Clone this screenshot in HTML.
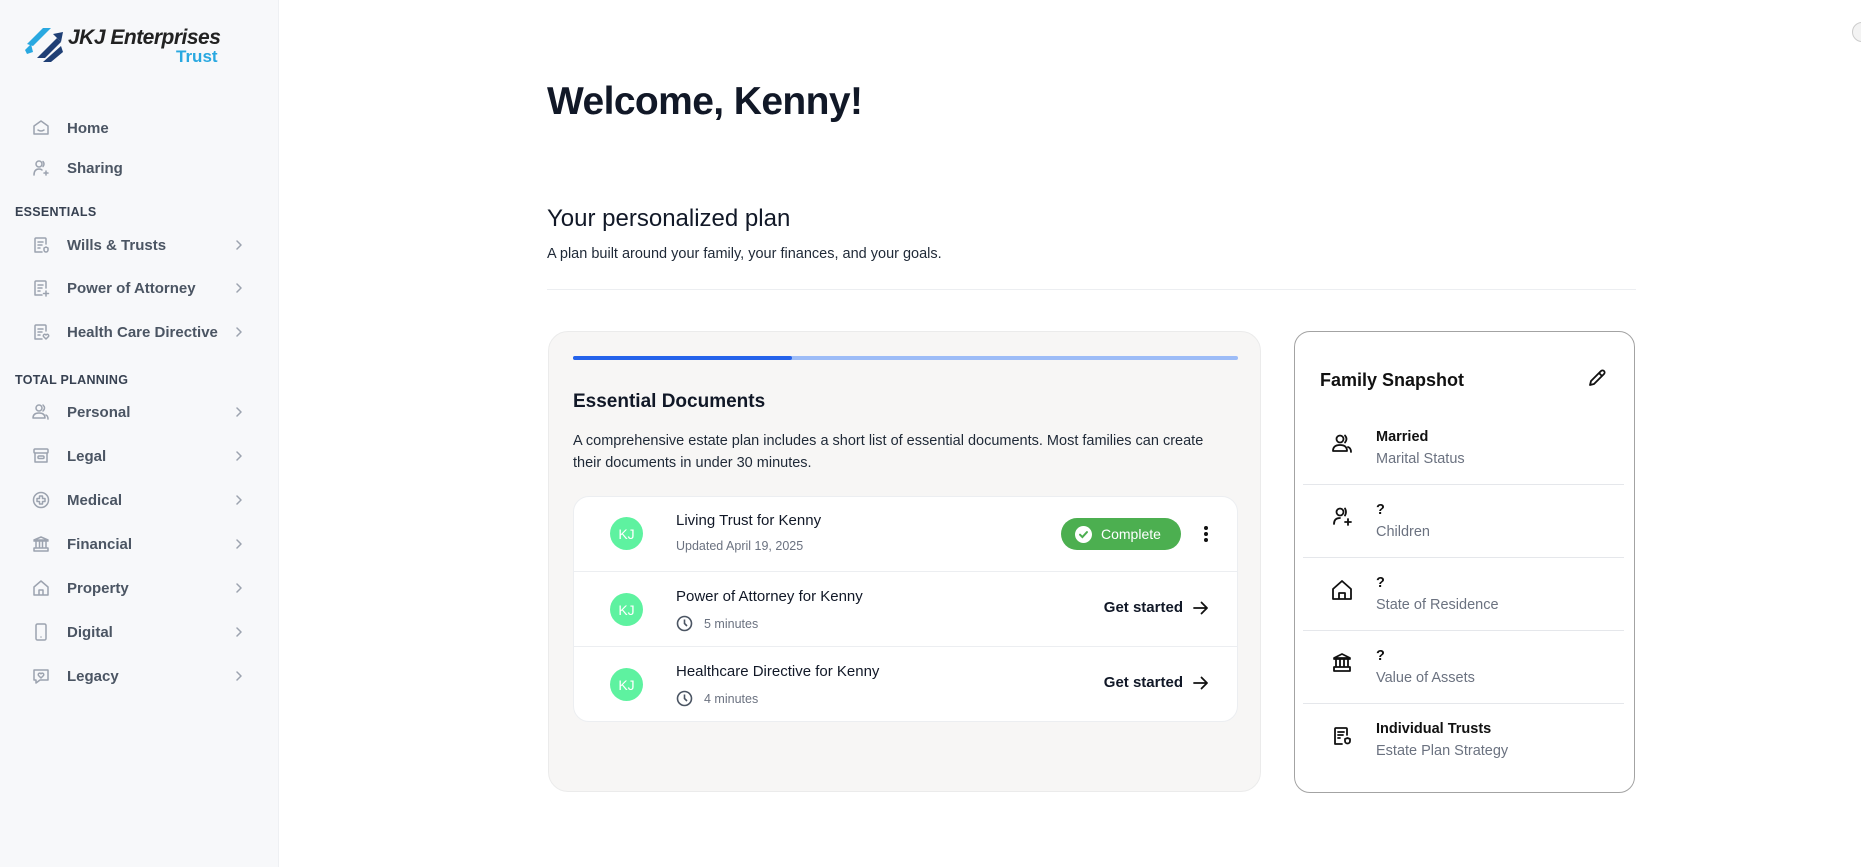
<!DOCTYPE html>
<html><head><meta charset="utf-8"><style>
*{margin:0;padding:0;box-sizing:border-box}
body{width:1861px;height:867px;overflow:hidden;background:#fff;font-family:"Liberation Sans",sans-serif;color:#111827;position:relative}
.sb{position:absolute;left:0;top:0;width:279px;height:867px;background:#f7f8fa;border-right:1px solid #eef0f3}
.ab{position:absolute}
.nav{position:absolute;left:0;width:279px;height:30px;display:flex;align-items:center;font-size:15px;font-weight:bold;color:#4b5563}
.nav svg{position:absolute;left:31px;width:20px;height:20px;fill:none;stroke:#9ca3af;stroke-width:1.5;stroke-linecap:round;stroke-linejoin:round}
.nav span{position:absolute;left:67px}
.nav .ch{position:absolute;left:234px;width:10px;height:10px;stroke:#9ca3af}
.sec{position:absolute;left:15px;font-size:12.5px;font-weight:bold;color:#374151;letter-spacing:.3px}
.row{position:absolute;left:0;width:663px;height:75px;border-top:1px solid #eceef1}
.av{position:absolute;left:36px;top:21px;width:33px;height:33px;border-radius:50%;background:#5ef2a0;color:#fff;font-size:14px;display:flex;align-items:center;justify-content:center}
.t1{position:absolute;left:102px;top:16px;font-size:15px;color:#111827}
.t2{position:absolute;left:102px;top:43px;font-size:12.5px;color:#6b7280;display:flex;align-items:center;gap:8px}
.gs{position:absolute;right:28px;top:27px;font-size:15px;font-weight:bold;display:flex;align-items:center;gap:10px}
.fr{position:absolute;left:8px;width:321px;height:73px;border-top:1px solid #e5e7eb}
.fr svg{position:absolute;left:27px;top:20px;width:24px;height:24px;fill:none;stroke:#111;stroke-width:1.8;stroke-linecap:round;stroke-linejoin:round}
.fr b{position:absolute;left:73px;top:17px;font-size:14.5px;font-weight:bold;color:#111}
.fr i{position:absolute;left:73px;top:39px;font-size:14.5px;font-style:normal;color:#6b7280}
</style></head><body>
<div class="sb">
 <svg class="ab" style="left:23px;top:24px" width="44" height="40" viewBox="0 0 44 40"><path d="M4 20 L20 4 L28 4 L10 22 Z" fill="#29a8e0"/><path d="M2 26 L8 20 L10 28 L4 30Z" fill="#29a8e0"/><path d="M14 34 L34 14 L38 18 L22 34Z" fill="#1f3f75"/><path d="M30 10 L40 8 L38 18Z" fill="#1f3f75"/><path d="M20 38 L38 22 L40 28 L28 38Z" fill="#1f3f75"/></svg>
 <div class="ab" style="left:68px;top:26px;font-size:21px;font-weight:bold;font-style:italic;color:#222;letter-spacing:-.5px">JKJ Enterprises</div>
 <div class="ab" style="left:176px;top:47px;font-size:17px;font-weight:bold;color:#29a8e0">Trust</div>

 <div class="nav" style="top:113px"><svg viewBox="0 0 20 20"><path d="M3 8 L10 3 L17 8 V16 H3Z"/><path d="M7 12 Q10 14 13 12"/></svg><span>Home</span></div>
 <div class="nav" style="top:153px"><svg viewBox="0 0 20 20"><circle cx="8" cy="6" r="3"/><path d="M3 17 Q3 11 8 11 Q10 11 11 12"/><path d="M15 13v4M13 15h4"/><path d="M12 3.5 Q14 6 12 8.5"/></svg><span>Sharing</span></div>
 <div class="sec" style="top:205px">ESSENTIALS</div>
 <div class="nav" style="top:230px"><svg viewBox="0 0 20 20"><path d="M15 9V4a1 1 0 0 0-1-1H5a1 1 0 0 0-1 1v13h7"/><path d="M7 7h5M7 10h4M7 13h2"/><path d="M13 13l2-1 2 1v2a2 2 0 0 1-2 2 2 2 0 0 1-2-2z"/></svg><span>Wills &amp; Trusts</span><svg class="ch" viewBox="0 0 10 10"><path d="M3 1l4 4-4 4"/></svg></div>
 <div class="nav" style="top:273px"><svg viewBox="0 0 20 20"><path d="M15 10V4a1 1 0 0 0-1-1H5a1 1 0 0 0-1 1v13h7"/><path d="M7 7h5M7 10h4M7 13h2"/><path d="M15 13v5M12.5 15.5h5"/></svg><span>Power of Attorney</span><svg class="ch" viewBox="0 0 10 10"><path d="M3 1l4 4-4 4"/></svg></div>
 <div class="nav" style="top:317px"><svg viewBox="0 0 20 20"><path d="M15 9V4a1 1 0 0 0-1-1H5a1 1 0 0 0-1 1v13h7"/><path d="M7 7h5M7 10h4M7 13h2"/><path d="M15 17l-2.5-2.5a1.3 1.3 0 0 1 2.5-1.5 1.3 1.3 0 0 1 2.5 1.5z"/></svg><span>Health Care Directive</span><svg class="ch" viewBox="0 0 10 10"><path d="M3 1l4 4-4 4"/></svg></div>
 <div class="sec" style="top:373px">TOTAL PLANNING</div>
 <div class="nav" style="top:397px"><svg viewBox="0 0 20 20"><circle cx="8" cy="6" r="3"/><path d="M2 16 Q2 11 8 11 Q14 11 14 16Z"/><path d="M12 3 Q15 6 12 9M15 13 Q17 14 17 17"/></svg><span>Personal</span><svg class="ch" viewBox="0 0 10 10"><path d="M3 1l4 4-4 4"/></svg></div>
 <div class="nav" style="top:441px"><svg viewBox="0 0 20 20"><rect x="3" y="3" width="14" height="4" rx="1"/><path d="M4 7v9h12V7"/><rect x="7" y="10" width="6" height="2.5" rx="1"/></svg><span>Legal</span><svg class="ch" viewBox="0 0 10 10"><path d="M3 1l4 4-4 4"/></svg></div>
 <div class="nav" style="top:485px"><svg viewBox="0 0 20 20"><circle cx="10" cy="10" r="7.5"/><path d="M8.5 6h3v2.5H14v3h-2.5V14h-3v-2.5H6v-3h2.5z"/></svg><span>Medical</span><svg class="ch" viewBox="0 0 10 10"><path d="M3 1l4 4-4 4"/></svg></div>
 <div class="nav" style="top:529px"><svg viewBox="0 0 20 20"><path d="M3 6 L10 3 L17 6 Z M3 7h14M5 7v7M8.5 7v7M11.5 7v7M15 7v7M3 14h14v3H3z"/></svg><span>Financial</span><svg class="ch" viewBox="0 0 10 10"><path d="M3 1l4 4-4 4"/></svg></div>
 <div class="nav" style="top:573px"><svg viewBox="0 0 20 20"><path d="M3 9 L10 3 L17 9 V17 H3Z M8 17v-5h4v5"/></svg><span>Property</span><svg class="ch" viewBox="0 0 10 10"><path d="M3 1l4 4-4 4"/></svg></div>
 <div class="nav" style="top:617px"><svg viewBox="0 0 20 20"><rect x="5" y="2" width="10" height="16" rx="1.5"/><path d="M10 15h.01"/></svg><span>Digital</span><svg class="ch" viewBox="0 0 10 10"><path d="M3 1l4 4-4 4"/></svg></div>
 <div class="nav" style="top:661px"><svg viewBox="0 0 20 20"><path d="M3 4h14v10H9l-4 3v-3H3z"/><path d="M10 12l-2.5-2.5a1.3 1.3 0 0 1 2.5-1.7 1.3 1.3 0 0 1 2.5 1.7z"/></svg><span>Legacy</span><svg class="ch" viewBox="0 0 10 10"><path d="M3 1l4 4-4 4"/></svg></div>
</div>

<div class="ab" style="left:1852px;top:22px;width:20px;height:20px;border-radius:50%;border:1px solid #ccc;background:#f3f3f3"></div>

<div class="ab" style="left:547px;top:80px;font-size:39px;font-weight:bold;color:#111827;letter-spacing:-.6px">Welcome, Kenny!</div>
<div class="ab" style="left:547px;top:205px;font-size:24px;color:#111827">Your personalized plan</div>
<div class="ab" style="left:547px;top:246px;font-size:14.5px;color:#1f2937">A plan built around your family, your finances, and your goals.</div>
<div class="ab" style="left:547px;top:289px;width:1089px;height:1px;background:#eceef1"></div>

<div class="ab" style="left:548px;top:331px;width:713px;height:461px;background:#f7f6f5;border:1px solid #ebebeb;border-radius:20px">
 <div class="ab" style="left:24px;top:24px;width:665px;height:4px;background:#9dbcf7;border-radius:2px"></div>
 <div class="ab" style="left:24px;top:24px;width:219px;height:4px;background:#2563eb;border-radius:2px"></div>
 <div class="ab" style="left:24px;top:59px;font-size:19px;font-weight:bold;color:#111827">Essential Documents</div>
 <div class="ab" style="left:24px;top:98px;width:660px;font-size:14.5px;line-height:22px;color:#1f2937">A comprehensive estate plan includes a short list of essential documents. Most families can create their documents in under 30 minutes.</div>
 <div class="ab" style="left:24px;top:164px;width:665px;height:226px;background:#fff;border:1px solid #eceef1;border-radius:16px;overflow:hidden">
  <div class="row" style="top:-1px;border-top:none">
   <div class="av">KJ</div><div class="t1">Living Trust for Kenny</div><div class="t2">Updated April 19, 2025</div>
   <div class="ab" style="left:487px;top:22px;width:120px;height:32px;border-radius:16px;background:#4caf50;color:#fff;font-size:14px;display:flex;align-items:center;padding-left:14px;gap:9px"><svg width="17" height="17" viewBox="0 0 17 17"><circle cx="8.5" cy="8.5" r="8.5" fill="#fff"/><path d="M5 8.7l2.4 2.4 4.6-5" stroke="#4caf50" stroke-width="2" fill="none" stroke-linecap="round"/></svg>Complete</div>
   <svg class="ab" style="left:629px;top:29px" width="6" height="18" viewBox="0 0 6 18"><circle cx="3" cy="3" r="2" fill="#111"/><circle cx="3" cy="9" r="2" fill="#111"/><circle cx="3" cy="15" r="2" fill="#111"/></svg>
  </div>
  <div class="row" style="top:74px">
   <div class="av">KJ</div><div class="t1">Power of Attorney for Kenny</div>
   <div class="t2"><svg width="17" height="17" viewBox="0 0 17 17" fill="none" stroke="#4b5563" stroke-width="1.6"><circle cx="8.5" cy="8.5" r="7"/><path d="M8.5 4.5v4l2.5 2.5"/></svg><span style="margin-left:3px">5 minutes</span></div>
   <div class="gs">Get started <svg width="16" height="14" viewBox="0 0 16 14" fill="none" stroke="#111" stroke-width="1.8" stroke-linecap="round" stroke-linejoin="round"><path d="M1 7h13M8.5 1.5 14 7l-5.5 5.5"/></svg></div>
  </div>
  <div class="row" style="top:149px">
   <div class="av">KJ</div><div class="t1">Healthcare Directive for Kenny</div>
   <div class="t2"><svg width="17" height="17" viewBox="0 0 17 17" fill="none" stroke="#4b5563" stroke-width="1.6"><circle cx="8.5" cy="8.5" r="7"/><path d="M8.5 4.5v4l2.5 2.5"/></svg><span style="margin-left:3px">4 minutes</span></div>
   <div class="gs">Get started <svg width="16" height="14" viewBox="0 0 16 14" fill="none" stroke="#111" stroke-width="1.8" stroke-linecap="round" stroke-linejoin="round"><path d="M1 7h13M8.5 1.5 14 7l-5.5 5.5"/></svg></div>
  </div>
 </div>
</div>

<div class="ab" style="left:1294px;top:331px;width:341px;height:462px;border:1.3px solid #a3a3a3;border-radius:16px;background:#fff">
 <div class="ab" style="left:25px;top:38px;font-size:18px;font-weight:bold;color:#111">Family Snapshot</div>
 <svg class="ab" style="left:291px;top:35px" width="22" height="22" viewBox="0 0 22 22" fill="none" stroke="#111" stroke-width="1.8" stroke-linejoin="round"><path d="M4 18l1-4L15 4a2 2 0 0 1 3 3L8 17z"/><path d="M13 6l3 3"/></svg>
 <div class="fr" style="top:80px;border-top:none"><svg viewBox="0 0 24 24"><circle cx="10" cy="7" r="3.5"/><path d="M3 19 Q3 13 10 13 Q17 13 17 19Z"/><path d="M15 3.5 Q18 7 15 10.5M18 15 Q21 16 21 20"/></svg><b>Married</b><i>Marital Status</i></div>
 <div class="fr" style="top:152px"><svg viewBox="0 0 24 24"><circle cx="10" cy="7" r="3.5"/><path d="M4 19 Q4 13 10 13"/><path d="M18 14v6M15 17h6"/><path d="M15 3.5 Q17 7 15 10.5"/></svg><b>?</b><i>Children</i></div>
 <div class="fr" style="top:225px"><svg viewBox="0 0 24 24"><path d="M3 11 L12 3 L21 11 V21 H3Z M9 21v-6h6v6"/></svg><b>?</b><i>State of Residence</i></div>
 <div class="fr" style="top:298px"><svg viewBox="0 0 24 24"><path d="M4 7 L12 3 L20 7Z M4 8h16M6 8v8M10 8v8M14 8v8M18 8v8M4 16h16v4H4z"/></svg><b>?</b><i>Value of Assets</i></div>
 <div class="fr" style="top:371px"><svg viewBox="0 0 24 24"><path d="M17 11V5a1 1 0 0 0-1-1H6a1 1 0 0 0-1 1v15h7"/><path d="M8 8h6M8 11h5M8 14h2"/><path d="M15 15l2.5-1 2.5 1v2a2.5 2.5 0 0 1-5 0z"/></svg><b>Individual Trusts</b><i>Estate Plan Strategy</i></div>
</div>
</body></html>
